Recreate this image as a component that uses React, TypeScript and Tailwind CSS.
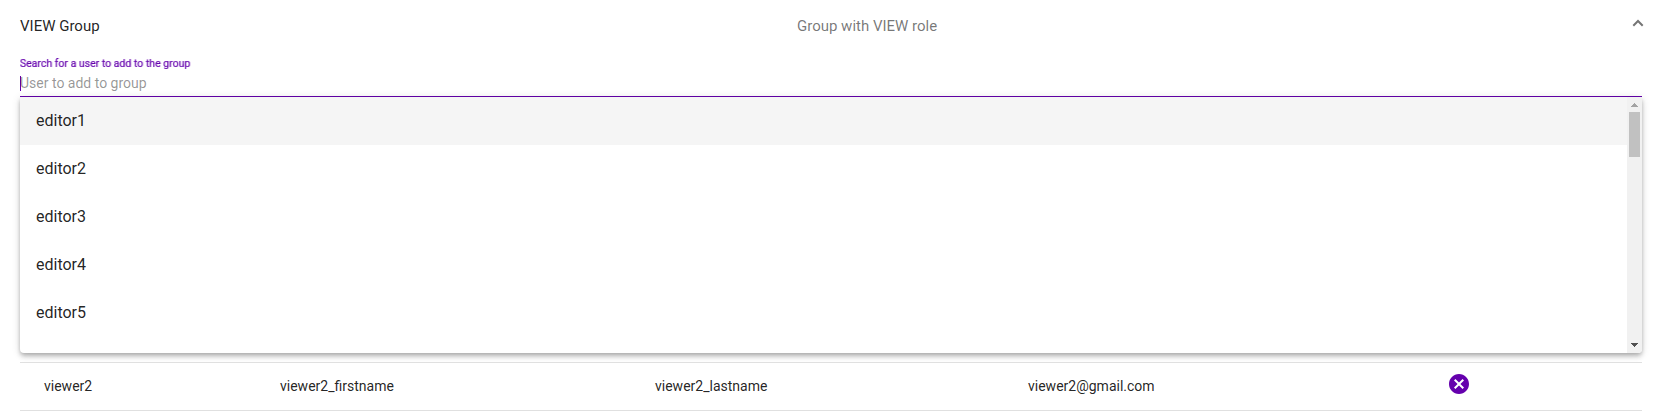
import React from 'react';
import { MdCancel } from 'react-icons/md';

const users: string[] = ['editor1', 'editor2', 'editor3', 'editor4', 'editor5'];

function PanelHeader() {
  return (
    <header className="flex h-[52px] items-center text-[15px] leading-5">
      <h2 className="w-[777px] text-black/87">VIEW Group</h2>
      <p className="flex-1 text-black/54">Group with VIEW role</p>
      <svg className="mr-[-2px] mb-[7px] h-[8px] w-[12px]" viewBox="0 0 12 8" fill="none">
        <path d="M1.3 6.7 6 2l4.7 4.7" stroke="#757575" strokeWidth="2" />
      </svg>
    </header>
  );
}

function Scrollbar() {
  return (
    <div className="flex w-[15px] flex-col items-center bg-[#f1f1f1]">
      <svg className="mt-[6px] h-[4px] w-[7px]" viewBox="0 0 7 4" shapeRendering="crispEdges">
        <path d="M3 0h1v1h1v1h1v1h1v1H0V3h1V2h1V1h1z" fill="#a3a3a3" />
      </svg>
      <div className="mt-[5px] h-[45px] w-[11px] bg-[#c1c1c1]" />
      <svg className="mt-auto mb-[6px] h-[4px] w-[7px]" viewBox="0 0 7 4" shapeRendering="crispEdges">
        <path d="M0 0h7v1H6v1H5v1H4v1H3V3H2V2H1V1H0z" fill="#505050" />
      </svg>
    </div>
  );
}

function UserMenu() {
  return (
    <div className="absolute top-[calc(100%+1px)] right-0 left-0 flex h-[256px] overflow-hidden rounded-b bg-white shadow-[0_2px_4px_-1px_rgba(0,0,0,0.2),0_4px_5px_0_rgba(0,0,0,0.14),0_1px_10px_0_rgba(0,0,0,0.12)]">
      <ul className="flex-1">
        {users.map((user, index) => (
          <li
            key={user}
            className={`flex h-12 items-center px-4 text-base text-black/87 ${index === 0 ? 'bg-[#f5f5f5]' : ''}`}
          >
            {user}
          </li>
        ))}
      </ul>
      <Scrollbar />
    </div>
  );
}

function UserSearch() {
  return (
    <div className="relative flex h-[45px] flex-col border-b border-[#6500ad]">
      <label className="mt-[3px] h-[16px] origin-left text-sm leading-4 text-[#6500ad] [-webkit-text-stroke:0.25px_#6500ad] [transform:perspective(100px)_scale(0.75)_translateZ(0.001px)]">
        Search for a user to add to the group
      </label>
      <div className="mt-1 flex h-4 items-center text-sm leading-4">
        <span className="-mr-px h-[15px] w-px bg-[#6500ad]" />
        <span className="text-black/42">User to add to group</span>
      </div>
      <UserMenu />
    </div>
  );
}

export default function App() {
  return (
    <main className="h-[420px] bg-white pr-[19px] pl-5 font-['Roboto',sans-serif]">
      <PanelHeader />
      <UserSearch />
      <section className="mt-[265px] flex h-[49px] items-center border-y border-black/12 pl-6 text-sm text-black/87">
        <span className="mb-0.5 w-[236px]">viewer2</span>
        <span className="mb-0.5 w-[375px]">viewer2_firstname</span>
        <span className="mb-0.5 w-[373px]">viewer2_lastname</span>
        <span className="mb-0.5 w-[419px]">viewer2@gmail.com</span>
        <MdCancel className="mb-[5px] size-6 text-[#6500ad]" />
      </section>
    </main>
  );
}
